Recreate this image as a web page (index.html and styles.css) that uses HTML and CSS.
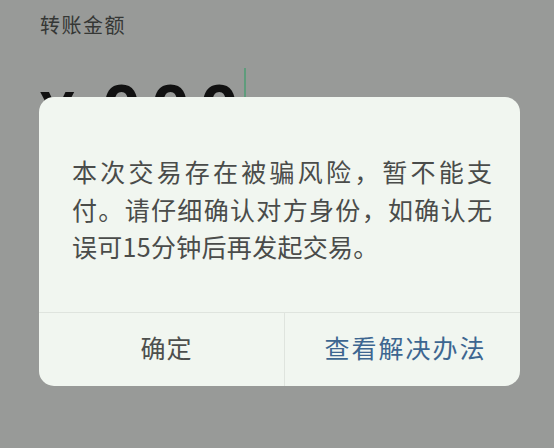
FILE: index.html
```html
<!DOCTYPE html>
<html lang="zh-CN">
<head>
<meta charset="utf-8">
<title>转账</title>
<link rel="stylesheet" href="styles.css">
</head>
<body>
<div class="page">
  <div class="label">转账金额</div>
  <div class="amount">
    <span class="yen">¥</span><span class="digits">000</span><span class="cursor"></span>
  </div>
</div>
<div class="dialog">
  <div class="msg">
    <div class="line just">本次交易存在被骗风险，暂不能支</div>
    <div class="line just">付。请仔细确认对方身份，如确认无</div>
    <div class="line last">误可15分钟后再发起交易。</div>
  </div>
  <div class="actions">
    <div class="btn ok">确定</div>
    <div class="btn link">查看解决办法</div>
  </div>
</div>
</body>
</html>
```
FILE: styles.css
```css
html, body {
  margin: 0;
  padding: 0;
}
body {
  width: 554px;
  height: 448px;
  background: #989a98;
  font-family: "Noto Sans CJK SC", "Noto Sans", sans-serif;
  overflow: hidden;
  position: relative;
}
.page {
  padding: 10px 0 0 40px;
}
.label {
  font-size: 20px;
  line-height: 30px;
  color: #353735;
  letter-spacing: 1.5px;
}
.amount {
  display: flex;
  align-items: baseline;
  margin-top: 35px;
  height: 70px;
}
.yen {
  font-family: "Liberation Sans", sans-serif;
  font-weight: bold;
  font-size: 62px;
  line-height: 70px;
  color: #111;
  width: 62px;
}
.digits {
  font-family: "Liberation Sans", sans-serif;
  font-weight: bold;
  font-size: 70px;
  line-height: 70px;
  letter-spacing: 10px;
  color: #111;
}
.cursor {
  align-self: flex-start;
  width: 2px;
  height: 80px;
  margin-top: -7px;
  margin-left: -5px;
  background: #5f9c7c;
}
.dialog {
  position: absolute;
  left: 39px;
  top: 97px;
  width: 481px;
  height: 289px;
  background: #f1f6f0;
  border-radius: 15px;
  display: flex;
  flex-direction: column;
  overflow: hidden;
}
.msg {
  flex: 1;
  padding: 56px 28px 0 33px;
  color: #4a4c4a;
  font-size: 25px;
  line-height: 37.5px;
}
.line {
  white-space: nowrap;
}
.just {
  text-align: justify;
  text-align-last: justify;
}
.last {
  letter-spacing: 0.3px;
}
.actions {
  height: 73px;
  display: flex;
  border-top: 1px solid #dfe4de;
}
.btn {
  display: flex;
  align-items: center;
  justify-content: center;
  font-size: 25px;
  padding-bottom: 5px;
  box-sizing: border-box;
}
.ok {
  flex: none;
  width: 246px;
  color: #4d4f4d;
  border-right: 1px solid #dfe4de;
  padding-left: 10px;
  letter-spacing: 1px;
}
.link {
  flex: 1;
  color: #3d6690;
  padding-left: 6px;
  letter-spacing: 2px;
}
```
